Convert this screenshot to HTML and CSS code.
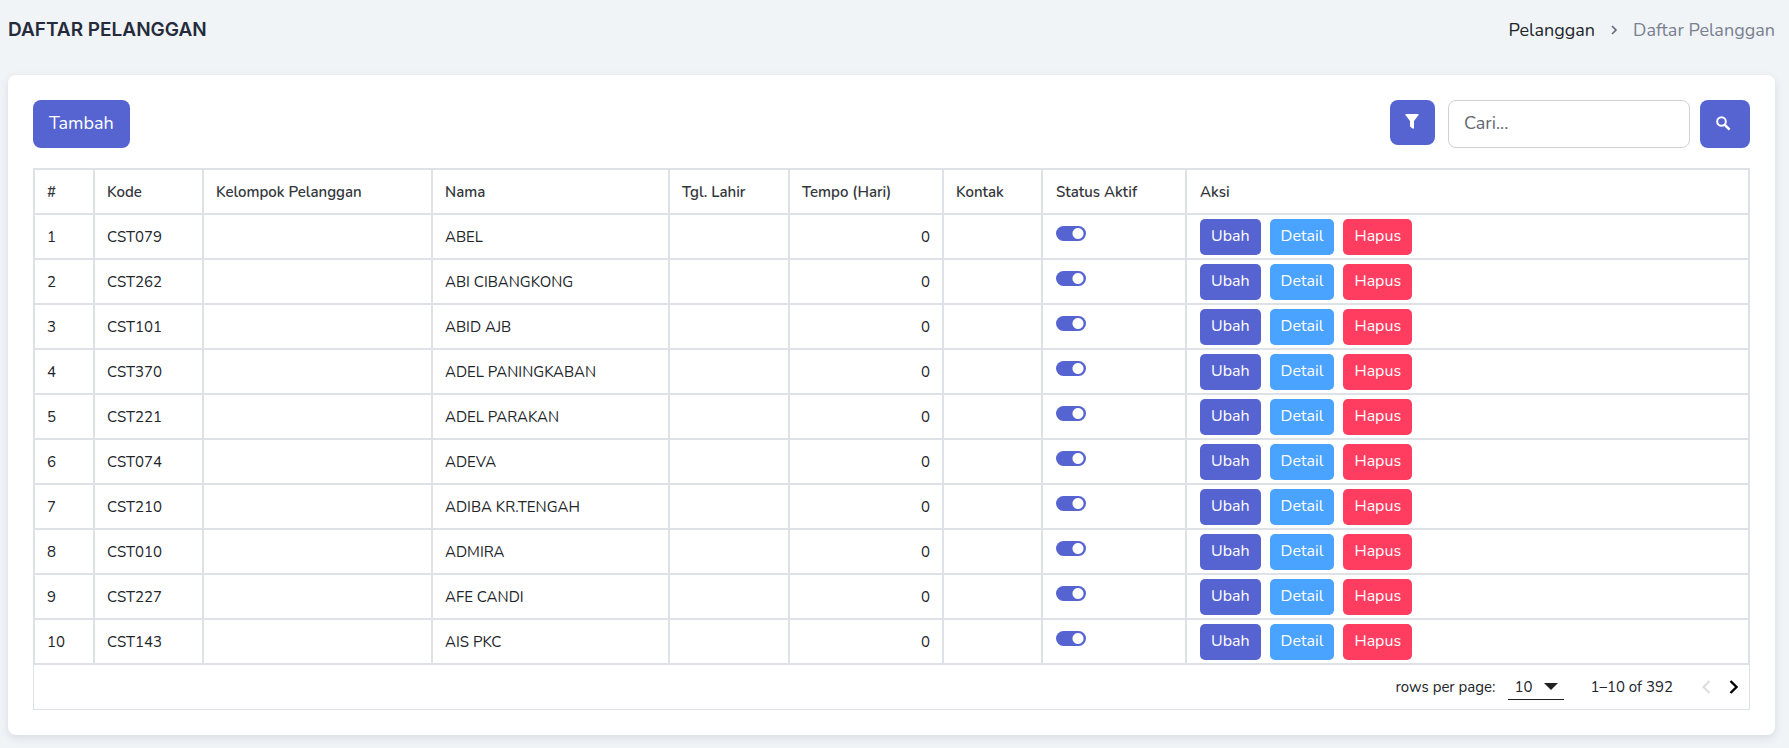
FILE: index.html
```html
<!DOCTYPE html>
<html lang="id">
<head>
    <meta charset="UTF-8">
    <meta name="viewport" content="width=device-width, initial-scale=1.0">
    <title>Daftar Pelanggan</title>
    <link rel="stylesheet" href="styles.css">
</head>
<body>
    <header class="page-header">
        <h1>DAFTAR PELANGGAN</h1>
        <nav class="breadcrumb" aria-label="Breadcrumb">
            <a href="#">Pelanggan</a>
            <svg width="8" height="10" viewBox="0 0 8 10" aria-hidden="true"><path d="M2 1l4 4-4 4" fill="none" stroke="#5f6878" stroke-width="1.6"/></svg>
            <span>Daftar Pelanggan</span>
        </nav>
    </header>

    <main class="card">
        <div class="toolbar">
            <button type="button" class="btn">Tambah</button>
            <form class="search" onsubmit="return false">
                <button type="button" class="btn btn-filter" aria-label="Filter">
                    <svg width="14" height="15" viewBox="0 0 14 15" aria-hidden="true"><path d="M1 0h12q1 0 .6 1L9 7v7q-.2 1-1 .7L5 12.500V7L.4 1Q0 0 1 0z" fill="#fff"/></svg>
                </button>
                <input type="text" placeholder="Cari..." aria-label="Cari">
                <button type="submit" class="btn btn-search" aria-label="Cari pelanggan">
                    <svg width="15" height="15" viewBox="0 0 15 15" aria-hidden="true"><circle cx="5.500" cy="5.500" r="4.300" fill="none" stroke="#fff" stroke-width="2"/><path d="M8.800 8.800l4.800 4.800" stroke="#fff" stroke-width="2.600"/></svg>
                </button>
            </form>
        </div>

        <table>
            <colgroup>
                <col class="col-no">
                <col class="col-kode">
                <col class="col-kelompok">
                <col class="col-nama">
                <col class="col-lahir">
                <col class="col-tempo">
                <col class="col-kontak">
                <col class="col-status">
                <col>
            </colgroup>
            <thead>
                <tr>
                    <th>#</th>
                    <th>Kode</th>
                    <th>Kelompok Pelanggan</th>
                    <th>Nama</th>
                    <th>Tgl. Lahir</th>
                    <th>Tempo (Hari)</th>
                    <th>Kontak</th>
                    <th class="status">Status Aktif</th>
                    <th class="actions">Aksi</th>
                </tr>
            </thead>
            <tbody id="customer-rows">
                <!-- Customer rows will be inserted here -->
            </tbody>
        </table>

        <div class="pagination">
            <label for="page-size">rows per page:</label>
            <div class="page-size">
                <select id="page-size">
                    <option>10</option>
                    <option>25</option>
                    <option>50</option>
                </select>
                <svg width="14" height="7" viewBox="0 0 14 7" aria-hidden="true"><path d="M0 0h14L7 7z" fill="#212121"/></svg>
            </div>
            <span class="range">1–10 of 392</span>
            <button type="button" class="page-btn" aria-label="Previous page" disabled>
                <svg width="9" height="14" viewBox="0 0 9 14" aria-hidden="true"><path d="M7.500 1L1.500 7l6 6" fill="none" stroke="currentColor" stroke-width="2"/></svg>
            </button>
            <button type="button" class="page-btn" aria-label="Next page">
                <svg width="9" height="14" viewBox="0 0 9 14" aria-hidden="true"><path d="M1.500 1l6 6-6 6" fill="none" stroke="currentColor" stroke-width="2.400"/></svg>
            </button>
        </div>
    </main>

    <script>
        const customers = [
            { kode: 'CST079', nama: 'ABEL' },
            { kode: 'CST262', nama: 'ABI CIBANGKONG' },
            { kode: 'CST101', nama: 'ABID AJB' },
            { kode: 'CST370', nama: 'ADEL PANINGKABAN' },
            { kode: 'CST221', nama: 'ADEL PARAKAN' },
            { kode: 'CST074', nama: 'ADEVA' },
            { kode: 'CST210', nama: 'ADIBA KR.TENGAH' },
            { kode: 'CST010', nama: 'ADMIRA' },
            { kode: 'CST227', nama: 'AFE CANDI' },
            { kode: 'CST143', nama: 'AIS PKC' }
        ];

        const rows = document.getElementById('customer-rows');

        customers.forEach((customer, index) => {
            const row = document.createElement('tr');

            row.innerHTML = `
                <td>${index + 1}</td>
                <td>${customer.kode}</td>
                <td></td>
                <td>${customer.nama}</td>
                <td></td>
                <td class="number">0</td>
                <td></td>
                <td class="status"><input type="checkbox" class="toggle" aria-label="Status aktif ${customer.nama}" checked></td>
                <td class="actions">
                    <div class="action-list">
                        <button type="button" class="btn-sm">Ubah</button>
                        <button type="button" class="btn-sm info">Detail</button>
                        <button type="button" class="btn-sm danger">Hapus</button>
                    </div>
                </td>
            `;

            rows.appendChild(row);
        });
    </script>
</body>
</html>
```
FILE: styles.css
```css
* {
    box-sizing: border-box;
}
body {
    margin: 0;
    padding: 0 14px 13px 8px;
    background: #f0f4f7;
    color: #212529;
    font-family: Nunito, Lato, sans-serif;
    font-size: 15px;
    line-height: 20px;
}
button, input, select {
    font-family: inherit;
    color: inherit;
}
button {
    border: none;
    cursor: pointer;
}
svg {
    display: block;
}
.page-header {
    display: flex;
    justify-content: space-between;
    align-items: center;
    height: 75px;
    padding-bottom: 16px;
}
h1 {
    margin: 0;
    color: #252b3b;
    font-family: Inter, sans-serif;
    font-size: 19px;
    font-weight: 600;
}
.breadcrumb {
    display: flex;
    align-items: center;
    gap: 15px;
    font-size: 18px;
    color: #7a8090;
}
.breadcrumb a {
    color: #212529;
    text-decoration: none;
}
.card {
    padding: 25px;
    background: #fff;
    border-radius: 8px;
    box-shadow: 0 3px 8px rgba(40, 60, 80, 0.12);
}
.toolbar {
    display: flex;
    justify-content: space-between;
    margin-bottom: 20px;
}
.btn {
    height: 48px;
    padding: 0 16px 2px;
    background: #5664d2;
    border-radius: 8px;
    color: #fff;
    font-size: 18px;
}
.search {
    display: flex;
    align-items: flex-start;
}
.search input {
    width: 242px;
    height: 48px;
    margin: 0 10px 0 13px;
    padding: 0 15px 2px;
    border: 1px solid #cfd1d3;
    border-radius: 8px;
    font-size: 18px;
}
.search input::placeholder {
    color: #62686f;
    opacity: 1;
}
.btn-filter {
    width: 45px;
    height: 45px;
    padding: 0 15px 2px;
}
.btn-search {
    width: 50px;
}
table {
    width: 100%;
    table-layout: fixed;
    border-collapse: collapse;
}
th, td {
    height: 45px;
    padding: 0 12px;
    border: 2px solid #dee2e6;
    text-align: left;
}
th {
    color: #33373b;
    font-weight: 600;
}
.col-no {
    width: 60px;
}
.col-kode {
    width: 109px;
}
.col-kelompok {
    width: 229px;
}
.col-nama {
    width: 237px;
}
.col-lahir {
    width: 120px;
}
.col-tempo {
    width: 154px;
}
.col-kontak {
    width: 99px;
}
.col-status {
    width: 144px;
}
.number {
    text-align: right;
}
.status, .actions {
    padding-left: 13px;
}
td.status {
    padding-top: 11px;
    vertical-align: top;
}
.toggle {
    appearance: none;
    display: block;
    width: 30px;
    height: 15px;
    margin: 0;
    border-radius: 8px;
    background: radial-gradient(circle at 22px 50%, #fff 5px, #5664d2 6px);
}
.action-list {
    display: flex;
    gap: 9px;
}
.btn-sm {
    height: 36px;
    padding: 0 11px 2px;
    background: #5664d2;
    border-radius: 5px;
    color: #fff;
    font-size: 16px;
}
.btn-sm.info {
    background: #4aa3ff;
}
.btn-sm.danger {
    background: #ff3d60;
}
.pagination {
    display: flex;
    justify-content: flex-end;
    align-items: center;
    height: 45px;
    padding-right: 7px;
    border: 1px solid #dee2e6;
    border-top: none;
}
.page-size {
    display: grid;
    align-items: center;
    width: 56px;
    margin: 0 26px 0 13px;
    border-bottom: 1px solid #212121;
}
.page-size select, .page-size svg {
    grid-area: 1 / 1;
}
.page-size select {
    appearance: none;
    height: 25px;
    padding: 0 6px;
    border: none;
    background: none;
    font-size: 15px;
}
.page-size svg {
    justify-self: end;
    margin-right: 6px;
    pointer-events: none;
}
.range {
    margin-right: 25px;
}
.page-btn {
    padding: 4px;
    background: none;
    color: #000;
}
.page-btn + .page-btn {
    margin-left: 10px;
}
.page-btn:disabled {
    color: #dcdcdc;
}
```
